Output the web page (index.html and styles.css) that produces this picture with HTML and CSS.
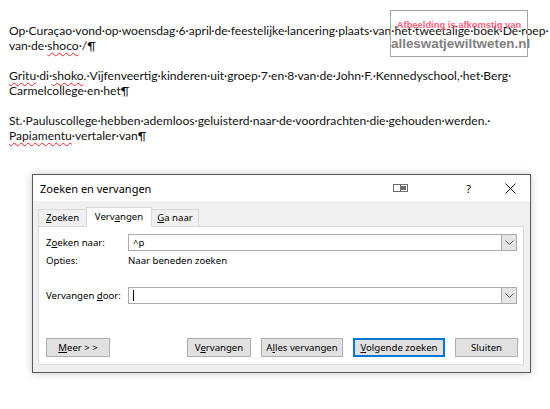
FILE: index.html
```html
<!DOCTYPE html>
<html lang="nl">
<head>
<meta charset="utf-8">
<title>Zoeken en vervangen</title>
<link rel="stylesheet" href="styles.css">
</head>
<body>
<div class="doc">
  <p class="para">
    <span class="line">Op·Curaçao·vond·op·woensdag·6·april·de·feestelijke·lancering·plaats·van·het·tweetalige·boek·De·roep·</span>
    <span class="line">van·de·<span class="sp">shoco</span>·/¶</span>
  </p>
  <p class="para">
    <span class="line"><span class="sp">Gritu</span>·di·<span class="sp">shoko</span>.·Vijfenveertig·kinderen·uit·groep·7·en·8·van·de·John·F.·Kennedyschool,·het·Berg·</span>
    <span class="line">Carmelcollege·en·het¶</span>
  </p>
  <p class="para">
    <span class="line">St.·Pauluscollege·hebben·ademloos·geluisterd·naar·de·voordrachten·die·gehouden·werden.·</span>
    <span class="line"><span class="sp">Papiamentu</span>·vertaler·van¶</span>
  </p>
</div>

<div class="watermark">
  <div class="wm-top">Afbeelding is afkomstig van</div>
  <div class="wm-bottom">alleswatjewiltweten.nl</div>
</div>

<div class="dialog">
  <div class="titlebar">
    <span class="title">Zoeken en vervangen</span>
    <div class="tb-icons">
      <svg class="tb-collapse" width="15" height="8" viewBox="0 0 15 8"><rect x="0.5" y="0.5" width="14" height="7" fill="#fff" stroke="#6d6d6d"/><rect x="8" y="2" width="5" height="4" fill="#6d6d6d"/><line x1="7.5" y1="0.5" x2="7.5" y2="7.5" stroke="#6d6d6d"/></svg>
      <span class="tb-help">?</span>
      <svg class="tb-close" width="11" height="11" viewBox="0 0 11 11"><path d="M0.5 0.5 L10.5 10.5 M10.5 0.5 L0.5 10.5" stroke="#111" stroke-width="1"/></svg>
    </div>
  </div>
  <div class="dbody">
    <div class="tabs">
      <div class="tab tab-find"><u>Z</u>oeken</div>
      <div class="tab tab-replace active">Verv<u>a</u>ngen</div>
      <div class="tab tab-goto"><u>G</u>a naar</div>
    </div>
    <div class="panel">
      <div class="row">
        <span class="label">Z<u>o</u>eken naar:</span>
        <div class="combo"><span class="value">^p</span><span class="drop"><svg width="9" height="5" viewBox="0 0 9 5"><path d="M0.5 0.5 L4.5 4.5 L8.5 0.5" fill="none" stroke="#555"/></svg></span></div>
      </div>
      <div class="row opts">
        <span class="label">Opties:</span>
        <span class="opt-value">Naar beneden zoeken</span>
      </div>
      <div class="row row-replace">
        <span class="label">Vervangen <u>d</u>oor:</span>
        <div class="combo"><span class="value"><span class="caret"></span></span><span class="drop"><svg width="9" height="5" viewBox="0 0 9 5"><path d="M0.5 0.5 L4.5 4.5 L8.5 0.5" fill="none" stroke="#555"/></svg></span></div>
      </div>
      <div class="buttons">
        <button class="btn btn-more"><u>M</u>eer &gt; &gt;</button>
        <div class="btn-group">
          <button class="btn btn-replace">V<u>e</u>rvangen</button>
          <button class="btn btn-all">A<u>l</u>les vervangen</button>
          <button class="btn btn-next default"><u>V</u>olgende zoeken</button>
          <button class="btn btn-close">Sluiten</button>
        </div>
      </div>
    </div>
  </div>
</div>
</body>
</html>
```

FILE: styles.css
```css
* { box-sizing: border-box; }

body {
  margin: 0;
  width: 550px;
  height: 409px;
  background: #fff;
  position: relative;
  overflow: hidden;
  font-family: Lato, "Noto Sans", sans-serif;
}

.doc {
  padding: 23px 0 0 9px;
  font-size: 12.1px;
  line-height: 15px;
  color: #111;
}

.para {
  margin: 0 0 15px;
}

.line {
  display: block;
  white-space: nowrap;
}

.sp {
  text-decoration: underline wavy #e3262f;
  text-decoration-thickness: 1px;
  text-underline-offset: 2px;
}

.watermark {
  position: absolute;
  left: 390px;
  top: 10px;
  width: 138px;
  height: 47px;
  border: 1px solid #a6a6a6;
  font-family: "Liberation Sans", Arial, sans-serif;
  font-weight: bold;
  text-align: center;
  white-space: nowrap;
}

.wm-top {
  margin-top: 8px;
  font-size: 9.4px;
  line-height: 11px;
  color: #ff5f7e;
}

.wm-bottom {
  margin-top: 6px;
  font-size: 13.4px;
  line-height: 16px;
  color: #7f7f7f;
}

.dialog {
  position: absolute;
  left: 32px;
  top: 174px;
  width: 499px;
  height: 199px;
  border: 1px solid #5a5a5a;
  background: #f0f0f0;
  box-shadow: 0 0 8px rgba(0, 0, 0, 0.22);
  display: flex;
  flex-direction: column;
  font-family: "Noto Sans", sans-serif;
  font-size: 9.6px;
  color: #000;
}

.titlebar {
  height: 26px;
  background: #fff;
  display: flex;
  align-items: center;
  padding-left: 7px;
}

.title {
  font-size: 11px;
  flex: 1;
}

.tb-icons {
  display: flex;
  align-items: center;
}

.tb-collapse {
  margin-right: 58px;
}

.tb-help {
  font-size: 11px;
  margin-right: 34px;
}

.tb-close {
  margin-right: 14px;
}

.dbody {
  flex: 1;
  display: flex;
  flex-direction: column;
  padding: 6px 6px 7px 5px;
}

.tabs {
  display: flex;
  align-items: flex-end;
  height: 19px;
  position: relative;
  z-index: 1;
}

.tab {
  height: 17px;
  border: 1px solid #d9d9d9;
  border-bottom: none;
  background: #f0f0f0;
  text-align: center;
  line-height: 16px;
}

.tab + .tab { margin-left: -1px; }

.tab-find { width: 49px; }
.tab-replace { width: 66px; }
.tab-goto { width: 48px; }

.tab.active {
  height: 20px;
  background: #fff;
  margin-bottom: -1px;
  line-height: 17px;
}

.panel {
  flex: 1;
  background: #fff;
  border: 1px solid #d9d9d9;
  padding: 7px 6px 7px 7px;
  display: flex;
  flex-direction: column;
}

.row {
  display: flex;
  align-items: center;
  height: 17px;
}

.label {
  width: 82px;
}

.combo {
  flex: 1;
  height: 17px;
  border: 1px solid #ababab;
  display: flex;
  align-items: stretch;
}

.value {
  flex: 1;
  padding-left: 4px;
  line-height: 15px;
  display: flex;
  align-items: center;
}

.caret {
  display: block;
  width: 1px;
  height: 11px;
  background: #000;
}

.drop {
  width: 15px;
  background: #e5e5e5;
  border-left: 1px solid #ababab;
  display: flex;
  align-items: center;
  justify-content: center;
}

.opts {
  margin-top: 1px;
  height: 17px;
}

.row-replace {
  margin-top: 18px;
}

.buttons {
  margin-top: auto;
  display: flex;
  align-items: center;
}

.btn-group {
  margin-left: auto;
  display: flex;
  gap: 10px;
  margin-right: -1px;
}

.btn {
  height: 19px;
  padding: 0;
  border: 1px solid #adadad;
  background: #e1e1e1;
  font-family: "Noto Sans", sans-serif;
  font-size: 9.6px;
  color: #000;
}

.btn-more { width: 64px; }
.btn-replace { width: 64px; }
.btn-all { width: 82px; }
.btn-next { width: 92px; }
.btn-close { width: 63px; }

.btn.default {
  border: 2px solid #0078d7;
}
```
